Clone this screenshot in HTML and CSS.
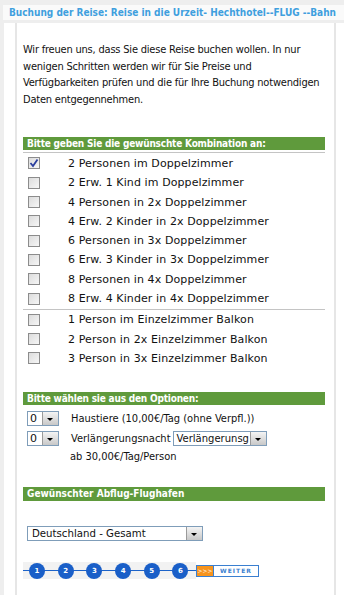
FILE: index.html
```html
<!DOCTYPE html>
<html lang="de">
<head>
    <meta charset="UTF-8">
    <title>Buchung der Reise</title>
    <link rel="stylesheet" href="styles.css">
</head>
<body>
    <div class="page-title">Buchung der Reise: Reise in die Urzeit- Hechthotel--FLUG --Bahn</div>

    <div class="panel">
        <div class="inner">
            <p class="intro">Wir freuen uns, dass Sie diese Reise buchen wollen. In nur wenigen Schritten werden wir für Sie Preise und Verfügbarkeiten prüfen und die für Ihre Buchung notwendigen Daten entgegennehmen.</p>

            <!-- Kombination -->
            <div class="bar">Bitte geben Sie die gewünschte Kombination an:</div>
            <div class="combo-list">
                <div class="combo-row"><span class="cb checked"><svg width="10" height="10" viewBox="0 0 10 10"><path d="M1.5 5 L4 8 L8.5 1.5" fill="none" stroke="#2b3f9e" stroke-width="1.8"/></svg></span><span class="combo-label">2 Personen im Doppelzimmer</span></div>
                <div class="combo-row"><span class="cb"></span><span class="combo-label">2 Erw. 1 Kind im Doppelzimmer</span></div>
                <div class="combo-row"><span class="cb"></span><span class="combo-label">4 Personen in 2x Doppelzimmer</span></div>
                <div class="combo-row"><span class="cb"></span><span class="combo-label">4 Erw. 2 Kinder in 2x Doppelzimmer</span></div>
                <div class="combo-row"><span class="cb"></span><span class="combo-label">6 Personen in 3x Doppelzimmer</span></div>
                <div class="combo-row"><span class="cb"></span><span class="combo-label">6 Erw. 3 Kinder in 3x Doppelzimmer</span></div>
                <div class="combo-row"><span class="cb"></span><span class="combo-label">8 Personen in 4x Doppelzimmer</span></div>
                <div class="combo-row"><span class="cb"></span><span class="combo-label">8 Erw. 4 Kinder in 4x Doppelzimmer</span></div>
                <div class="combo-sep"></div>
                <div class="combo-row"><span class="cb"></span><span class="combo-label">1 Person im Einzelzimmer Balkon</span></div>
                <div class="combo-row"><span class="cb"></span><span class="combo-label">2 Person in 2x Einzelzimmer Balkon</span></div>
                <div class="combo-row"><span class="cb"></span><span class="combo-label">3 Person in 3x Einzelzimmer Balkon</span></div>
            </div>

            <!-- Optionen -->
            <div class="bar options-bar">Bitte wählen sie aus den Optionen:</div>
            <div class="options">
                <div class="opt-row">
                    <span class="sel sel-small"><span class="sel-value">0</span><span class="sel-btn"></span></span>
                    <span class="opt-label">Haustiere (10,00€/Tag (ohne Verpfl.))</span>
                </div>
                <div class="opt-row">
                    <span class="sel sel-small"><span class="sel-value">0</span><span class="sel-btn"></span></span>
                    <span class="opt-label">Verlängerungsnacht</span>
                    <span class="sel sel-night"><span class="sel-value">Verlängerunsg</span><span class="sel-btn"></span></span>
                </div>
                <div class="opt-note">ab 30,00€/Tag/Person</div>
            </div>

            <!-- Flughafen -->
            <div class="bar bar-big">Gewünschter Abflug-Flughafen</div>
            <div class="airport">
                <span class="sel sel-airport"><span class="sel-value">Deutschland - Gesamt</span><span class="sel-btn"></span></span>
            </div>

            <div class="steps">
                <div class="step-track">
                    <span class="step">1</span>
                    <span class="step">2</span>
                    <span class="step">3</span>
                    <span class="step">4</span>
                    <span class="step">5</span>
                    <span class="step">6</span>
                </div>
                <span class="next-arrows">&gt;&gt;&gt;</span>
                <span class="next-label">WEITER</span>
            </div>
        </div>
    </div>
</body>
</html>
```

FILE: styles.css
```css
body {
    margin: 0;
    background: #eeeeee;
    font-family: "DejaVu Sans Condensed", "DejaVu Sans", sans-serif;
    color: #111;
}

.page-title {
    margin: 5px 0 0 3px;
    height: 15px;
    line-height: 15px;
    padding-left: 6px;
    background: #fafafa;
    color: #3f9fde;
    font-size: 10px;
    font-weight: bold;
    white-space: nowrap;
    overflow: hidden;
}

.panel {
    margin: 3px 0 0 4px;
    padding-left: 11px;
    background: #fff;
    height: 572px;
}

.inner {
    width: 311px;
    height: 100%;
    border-left: 2px solid #e6e6e6;
    border-right: 2px solid #e6e6e6;
    padding-left: 6px;
}

.intro {
    margin: 0;
    padding-top: 19px;
    width: 302px;
    font-size: 11px;
    letter-spacing: -0.2px;
    line-height: 16.7px;
    color: #111;
}

/* grüne Balken */
.bar {
    width: 298px;
    height: 13px;
    line-height: 13px;
    padding-left: 4px;
    margin-top: 28px;
    background: #5f9a3c;
    color: #fff;
    font-size: 10px;
    letter-spacing: -0.2px;
    font-weight: bold;
}

.options-bar {
    margin-top: 24px;
}

.bar-big {
    height: 14px;
    line-height: 14px;
    letter-spacing: 0;
    margin-top: 22px;
}

.combo-list {
    width: 302px;
    border-top: 1px solid #c4c4c4;
    margin-top: 2px;
    padding-top: 1px;
}

.combo-row {
    display: flex;
    align-items: center;
    height: 19.3px;
}

.combo-sep {
    height: 1px;
    background: #c4c4c4;
    margin-top: 1px;
}

.cb {
    width: 10px;
    height: 10px;
    margin-left: 5px;
    border: 1px solid #8c8c8c;
    background: linear-gradient(135deg, #dcdcdc, #f6f6f6);
    display: flex;
    align-items: center;
    justify-content: center;
}

.combo-label {
    margin-left: 28px;
    font-family: "DejaVu Sans", sans-serif;
    font-size: 11px;
    letter-spacing: 0.1px;
}

/* Auswahlfelder */
.sel {
    display: inline-flex;
    align-items: stretch;
    height: 13px;
    border: 1px solid #7f9db9;
    background: #fff;
}

.sel-value {
    flex: 1;
    padding-left: 2px;
    font-family: "DejaVu Sans", sans-serif;
    font-size: 11px;
    line-height: 13px;
    overflow: hidden;
    white-space: nowrap;
}

.sel-btn {
    width: 15px;
    background: linear-gradient(#f4f4f4, #c8c8c8);
    border-left: 1px solid #9a9a9a;
    position: relative;
}

.sel-btn::after {
    content: "";
    position: absolute;
    left: 4px;
    top: 6px;
    border-left: 3px solid transparent;
    border-right: 3px solid transparent;
    border-top: 3px solid #000;
}

.options {
    padding-top: 4px;
    padding-left: 4px;
}

.opt-row {
    display: flex;
    align-items: center;
    height: 19.5px;
}

.sel-small {
    width: 30px;
}

.opt-label {
    margin-left: 12px;
    font-size: 11px;
}

.sel-night {
    width: 92px;
    margin-left: 2px;
}

.sel-night .sel-value {
    font-size: 10px;
    padding-left: 3px;
}

.opt-note {
    padding-left: 43px;
    font-size: 11px;
    line-height: 16px;
    margin-top: 1px;
}

.airport {
    display: flex;
    padding: 25px 0 0 4px;
}

.sel-airport {
    width: 174px;
    height: 13px;
}

.sel-airport .sel-value {
    font-size: 10.2px;
    line-height: 13px;
    padding-left: 4px;
}

/* Schritte */
.steps {
    display: flex;
    align-items: center;
    margin-top: 21px;
}

.step-track {
    position: relative;
    display: flex;
    align-items: center;
    gap: 12.7px;
    box-sizing: border-box;
    width: 173px;
    height: 17px;
    padding-left: 6px;
    background: #f2f2f2;
}

.step-track::before {
    content: "";
    position: absolute;
    left: 0;
    right: 0;
    top: 8px;
    height: 1px;
    background: #1c63c9;
}

.step {
    position: relative;
    width: 16px;
    height: 16px;
    border-radius: 50%;
    background: #1a5fc8;
    color: #fff;
    font-family: "DejaVu Sans", sans-serif;
    font-size: 7px;
    font-weight: bold;
    display: flex;
    align-items: center;
    justify-content: center;
}

.next-arrows {
    width: 16px;
    height: 10px;
    border: 1px solid #3a7fd0;
    border-right: none;
    background: #f7941d;
    color: #fff;
    font-family: "DejaVu Sans", sans-serif;
    font-size: 6px;
    line-height: 10px;
    text-align: center;
}

.next-label {
    width: 44px;
    height: 10px;
    border: 1px solid #3a7fd0;
    background: #fff;
    color: #3a7fd0;
    font-family: "DejaVu Sans", sans-serif;
    font-size: 6px;
    font-weight: bold;
    letter-spacing: 1px;
    line-height: 10px;
    text-align: center;
}
```
